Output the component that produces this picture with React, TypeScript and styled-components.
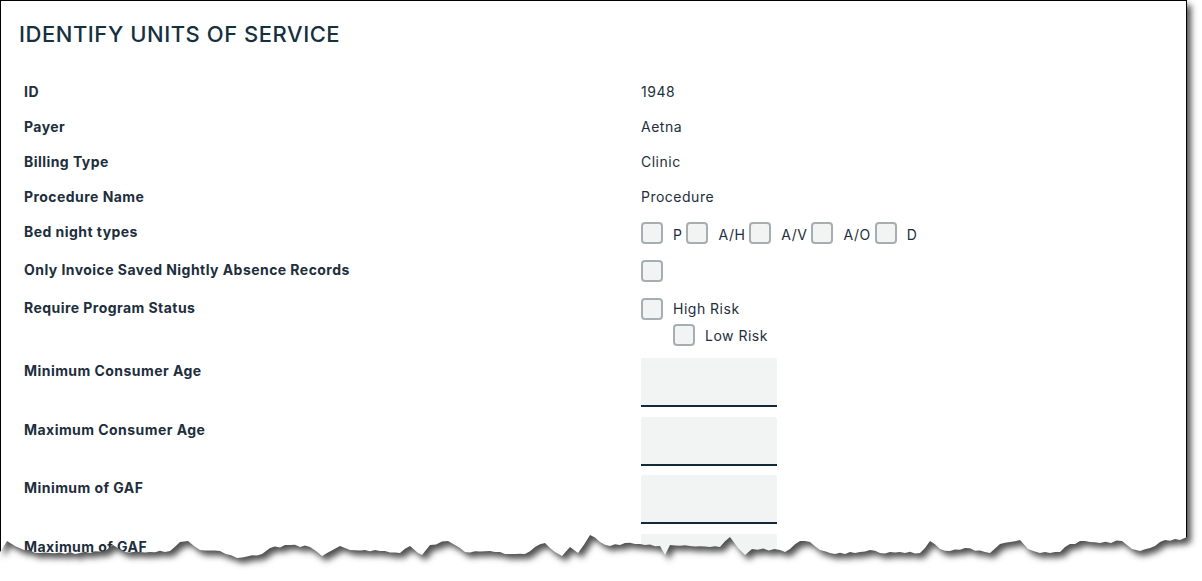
import * as React from "react";
import styled, { createGlobalStyle } from "styled-components";

const GlobalStyle = createGlobalStyle`
  html, body {
    margin: 0;
    padding: 0;
    background: #fff;
    overflow: hidden;
  }
`;

const Screen = styled.div`
  position: relative;
  width: 1202px;
  height: 581px;
  overflow: hidden;
  background: #fff;
  font-family: Inter, "Liberation Sans", sans-serif;
  color: #1d2e3c;
`;

const Panel = styled.section`
  width: 1187px;
  height: 581px;
  box-sizing: border-box;
  border: 1px solid #000;
  border-bottom: 0;
  padding: 20px 0 0 18px;
`;

const Title = styled.h1`
  margin: 0 0 28px;
  height: 26px;
  font-size: 22px;
  line-height: 26px;
  font-weight: 500;
  letter-spacing: 0.54px;
  color: #15303f;
`;

const Form = styled.div`
  padding-left: 5px;
`;

const Row = styled.div`
  display: grid;
  grid-template-columns: 617px 1fr;
`;

const Label = styled.div<{ $top?: number }>`
  padding-top: ${p => p.$top ?? 8}px;
  font-size: 14px;
  line-height: 17px;
  font-weight: 700;
  letter-spacing: 0.45px;
`;

const Value = styled.div<{ $top?: number; $bottom?: number }>`
  padding-top: ${p => p.$top ?? 8}px;
  padding-bottom: ${p => p.$bottom ?? 10}px;
  font-size: 14px;
  line-height: 17px;
  letter-spacing: 0.5px;
`;

const Options = styled.div`
  display: flex;
  gap: 4px;
`;

const Option = styled.label`
  display: flex;
  align-items: center;
  gap: 10px;
  height: 22px;
`;

const OptionText = styled.span<{ $drop?: number }>`
  position: relative;
  top: ${p => p.$drop ?? 1}px;
`;

const IndentedOption = styled(Option)`
  margin: 4px 0 0 32px;
`;

const Box = styled.span`
  display: block;
  width: 22px;
  height: 22px;
  box-sizing: border-box;
  border: 2px solid #a6aeb4;
  border-radius: 4px;
  background: #f2f4f4;
`;

const NumberField = styled.div`
  width: 136px;
  height: 49px;
  box-sizing: border-box;
  border-bottom: 2px solid #12293a;
  border-radius: 2px 2px 0 0;
  background: #f2f4f4;
`;

const TornEdge = styled.svg`
  position: absolute;
  left: 0;
  top: 0;
  pointer-events: none;
`;

const tear =
  "0,552 7,541 15,546 24,550 40,553 80,553 105,551 113,545 125,552 150,552 170,551 180,542 188,541 200,550 220,551 237,558 262,554 270,548 290,545 310,547 322,556 340,546 350,550 380,551 400,553 410,546 418,553 422,555 430,545 448,541 455,545 465,552 490,551 510,554 525,554 535,547 545,543 555,552 562,556 570,547 578,553 590,535 600,542 610,546 625,543 640,544 660,546 665,555 670,545 690,546 720,547 730,537 738,548 745,555 752,549 780,550 785,552 800,541 810,542 820,550 835,554 860,552 870,550 880,553 900,552 920,553 930,541 940,549 950,551 965,548 990,553 1000,544 1020,540 1028,549 1040,553 1060,552 1070,544 1085,541 1100,543 1122,541 1132,549 1140,551 1155,546 1165,540 1180,540 1187,537";

// break the long segments up so the edge gets the small frayed steps of torn paper
function frayed(points: string) {
  const list = points.split(" ").map(p => p.split(",").map(Number));
  const out: string[] = [];
  list.forEach(([x, y], i) => {
    out.push(`${x},${y}`);
    const next = list[i + 1];
    if (!next) return;
    const steps = Math.floor((next[0] - x) / 5);
    for (let s = 1; s < steps; s++) {
      const t = s / steps;
      const jitter = Math.sin(x * 12.9 + s * 78.2) * 0.9;
      out.push(`${(x + (next[0] - x) * t).toFixed(1)},${(y + (next[1] - y) * t + jitter).toFixed(1)}`);
    }
  });
  return out;
}

const pageShape = `0,0 1187,0 ${frayed(tear).reverse().join(" ")}`;

function PaperTear() {
  return (
    <TornEdge width="1202" height="581" viewBox="0 0 1202 581">
      <defs>
        <filter id="soft" x="-5%" y="-5%" width="110%" height="110%">
          <feGaussianBlur stdDeviation="3.2" />
        </filter>
        <mask id="outside" maskUnits="userSpaceOnUse" x="0" y="0" width="1202" height="581">
          <rect width="1202" height="581" fill="#fff" />
          <polygon points={pageShape} fill="#000" />
        </mask>
      </defs>
      <g mask="url(#outside)">
        <rect width="1202" height="581" fill="#fff" />
        <polygon
          points={pageShape}
          fill="#505050"
          filter="url(#soft)"
          transform="translate(4 5)"
        />
      </g>
    </TornEdge>
  );
}

const textRows = [
  ["ID", "1948"],
  ["Payer", "Aetna"],
  ["Billing Type", "Clinic"],
  ["Procedure Name", "Procedure"],
];

const bedNights = ["P", "A/H", "A/V", "A/O", "D"];
const numberRows = [
  "Minimum Consumer Age",
  "Maximum Consumer Age",
  "Minimum of GAF",
  "Maximum of GAF",
];

export default function App() {
  return (
    <Screen>
      <GlobalStyle />
      <Panel>
        <Title>IDENTIFY UNITS OF SERVICE</Title>
        <Form>
          {textRows.map(([name, value]) => (
            <Row key={name}>
              <Label>{name}</Label>
              <Value>{value}</Value>
            </Row>
          ))}
          <Row>
            <Label>Bed night types</Label>
            <Value $top={7} $bottom={9}>
              <Options>
                {bedNights.map(type => (
                  <Option key={type}>
                    <Box />
                    <OptionText>{type}</OptionText>
                  </Option>
                ))}
              </Options>
            </Value>
          </Row>
          <Row>
            <Label>Only Invoice Saved Nightly Absence Records</Label>
            <Value $top={7} $bottom={9}>
              <Box />
            </Value>
          </Row>
          <Row>
            <Label>Require Program Status</Label>
            <Value $top={7} $bottom={7}>
              <Option>
                <Box />
                <OptionText $drop={-1}>High Risk</OptionText>
              </Option>
              <IndentedOption>
                <Box />
                <OptionText $drop={0}>Low Risk</OptionText>
              </IndentedOption>
            </Value>
          </Row>
          {numberRows.map(name => (
            <Row key={name}>
              <Label $top={9}>{name}</Label>
              <Value $top={5} $bottom={4.7}>
                <NumberField />
              </Value>
            </Row>
          ))}
        </Form>
      </Panel>
      <PaperTear />
    </Screen>
  );
}
